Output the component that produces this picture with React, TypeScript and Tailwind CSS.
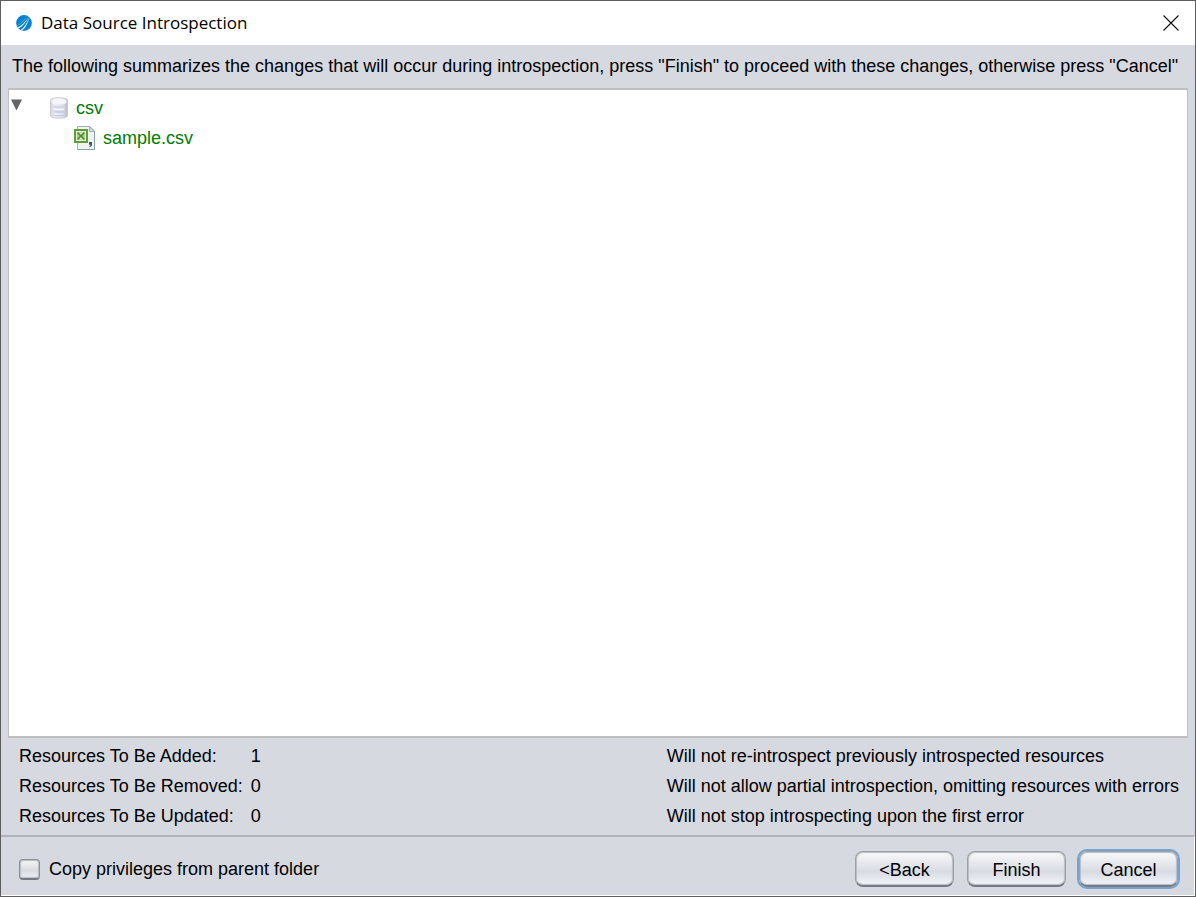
import { useState } from "react";

function AppLogo() {
  return (
    <svg width="16" height="16" viewBox="0 0 16 16" aria-hidden="true">
      <circle cx="8" cy="8" r="7.9" fill="#0a84cc" />
      <path d="M1.6 12.6C5.8 10.6 9.6 6.6 12.8 1.4C10.2 7 6.8 11.2 2.4 13.6Z" fill="#fff" />
      <path d="M4.8 15C8.4 12 11 7.8 13.4 2.4C12 8.2 9.6 12.4 6 15.7Z" fill="#e8f4fb" />
      <path d="M1.2 10.2C4.4 8.6 7.4 5.8 10.4 2.6C7.8 6 4.8 8.8 1.2 10.8Z" fill="#8cc6ea" />
    </svg>
  );
}

function DatabaseIcon() {
  return (
    <svg width="18" height="22" viewBox="0 0 18 22" aria-hidden="true">
      <defs>
        <linearGradient id="db-side" x1="0" x2="1" y1="0" y2="0">
          <stop offset="0" stopColor="#cfd0da" />
          <stop offset="0.25" stopColor="#f3f3fa" />
          <stop offset="0.7" stopColor="#e0e2ef" />
          <stop offset="1" stopColor="#b4b5c6" />
        </linearGradient>
      </defs>
      <path d="M0.5 3.4C0.5 -0.2 17.5 -0.2 17.5 3.4V18.4C17.5 22.2 0.5 22.2 0.5 18.4Z" fill="url(#db-side)" stroke="#cbcbd1" />
      <path d="M1.6 4C1.6 0.6 16.4 0.6 16.4 4V5.4C16.4 8 1.6 8 1.6 5.4Z" fill="#f6f6f7" />
      <path d="M3.5 8.2C6 9 12 9 14.5 8.2V11C12 11.8 6 11.8 3.5 11Z" fill="#d3d7e9" />
      <path d="M3.5 13C6 13.8 12 13.8 14.5 13V15.6C12 16.4 6 16.4 3.5 15.6Z" fill="#cbd0e4" />
      <path d="M3.5 17.4C6 18.2 12 18.2 14.5 17.4V18.8C12 19.8 6 19.8 3.5 18.8Z" fill="#c9cbdd" />
      <path d="M3.5 12C6 12.8 12 12.8 14.5 12" stroke="#fff" fill="none" />
    </svg>
  );
}

function CsvFileIcon() {
  return (
    <svg width="22" height="24" viewBox="0 0 22 24" aria-hidden="true">
      <path d="M3.5 0.5H16L20.5 5V23.5H3.5Z" fill="#eef4f4" stroke="#9db4b6" />
      <path d="M3.5 23.5H20.5V5" fill="none" stroke="#84a3a4" />
      <path d="M15.5 0.5V5.5H20.5Z" fill="#c9d9dc" stroke="#9db4b6" />
      <rect x="0" y="3" width="14" height="14" fill="#619c3a" />
      <rect x="2" y="5" width="10" height="10" fill="#e4efda" />
      <rect x="3" y="6" width="8" height="8" fill="#a5c98a" />
      <path d="M3.6 6.8L10.2 13.2M10.2 6.8L3.6 13.2" stroke="#4e8b2c" strokeWidth="1.4" />
      <path d="M5.4 6.4L7 8.2L8.6 6.4ZM5.4 13.6L7 11.8L8.6 13.6Z" fill="#edf5e6" />
      <path d="M15 16H18V18.6C18 20.2 17.2 21 15.4 21.2V19.9C16.3 19.7 16.6 19.4 16.6 18.8H15Z" fill="#4d4d57" />
    </svg>
  );
}

const counts = [
  { label: "Resources To Be Added:", value: 1 },
  { label: "Resources To Be Removed:", value: 0 },
  { label: "Resources To Be Updated:", value: 0 },
];

const notes = [
  "Will not re-introspect previously introspected resources",
  "Will not allow partial introspection, omitting resources with errors",
  "Will not stop introspecting upon the first error",
];

const buttonFace =
  "h-9 w-[99px] rounded-lg border border-[#9c9fa5] border-b-2 border-b-[#777a81] bg-linear-to-b from-[#fafafb] via-[#d8dbe2] via-60% to-[#f2f5fc] pt-0.5 text-center leading-8 shadow-[inset_0_0_1px_1px_#b9bcc3]";

export default function App() {
  const [open, setOpen] = useState(true);
  const [copy, setCopy] = useState(false);

  return (
    <div className="flex min-h-screen flex-col border border-[#5e5e60] bg-[#d6d9e0] font-['Liberation_Sans',Arial,sans-serif] text-lg leading-[30px] text-black">
      <header className="flex h-11 shrink-0 items-center bg-white pr-4 pl-[15px]">
        <AppLogo />
        <h1 className="ml-[9px] flex-1 font-['Open_Sans','Noto_Sans',sans-serif] text-[17px]">Data Source Introspection</h1>
        <button type="button" aria-label="Close" className="flex size-4 items-center justify-center">
          <svg width="16" height="16" viewBox="0 0 16 16" aria-hidden="true">
            <path d="M0.5 0.5L15.5 15.5M15.5 0.5L0.5 15.5" stroke="#111" strokeWidth="1.1" fill="none" />
          </svg>
        </button>
      </header>

      <main className="flex flex-1 flex-col">
        <p className="px-[11px] pt-1.5 pb-[7px]">
          The following summarizes the changes that will occur during introspection, press "Finish" to proceed with these
          changes, otherwise press "Cancel"
        </p>

        <section className="mx-[7px] flex-1 border border-t-2 border-b-2 border-[#c0c0c0] bg-white text-[#007b00]">
          <ul className="pt-[3px]">
            <li>
              <div className="flex items-center">
                <button
                  type="button"
                  aria-label="Toggle csv"
                  aria-expanded={open}
                  onClick={() => setOpen(!open)}
                  className="mr-7 flex h-[30px] w-[13px] items-start pt-1.5 pl-0.5"
                >
                  <svg width="11" height="12" viewBox="0 0 11 12" aria-hidden="true">
                    <path d="M0 0.5H11L5.5 11.5Z" fill="#646464" />
                  </svg>
                </button>
                <DatabaseIcon />
                <span className="ml-2">csv</span>
              </div>
              {open && (
                <ul>
                  <li className="flex items-center pl-[65px]">
                    <CsvFileIcon />
                    <span className="ml-[7px]">sample.csv</span>
                  </li>
                </ul>
              )}
            </li>
          </ul>
        </section>

        <section className="flex justify-between gap-8 pt-[3px] pr-4 pb-1 pl-[18px]">
          <table className="border-collapse">
            <tbody>
              {counts.map((row) => (
                <tr key={row.label}>
                  <th scope="row" className="p-0 pr-2 text-left font-normal">
                    {row.label}
                  </th>
                  <td className="p-0">{row.value}</td>
                </tr>
              ))}
            </tbody>
          </table>
          <ul>
            {notes.map((note) => (
              <li key={note}>{note}</li>
            ))}
          </ul>
        </section>
      </main>

      <footer className="flex items-center border-t-2 border-r border-b border-t-[#aeb2bb] border-r-white border-b-white pt-3.5 pr-4 pb-2 pl-[18px]">
        <label className="flex flex-1 items-center gap-[9px]">
          <input
            type="checkbox"
            checked={copy}
            onChange={(e) => setCopy(e.target.checked)}
            className="size-[21px] appearance-none rounded border border-[#8b8e95] border-b-2 border-b-[#777a81] bg-linear-to-b from-[#f6f6f7] via-[#d9dbe0] via-60% to-[#eef0f5] shadow-[inset_0_0_1px_1px_#b9bcc3] checked:from-[#8fb0cf] checked:to-[#5483ad]"
          />
          Copy privileges from parent folder
        </label>
        <div className="flex gap-[13px]">
          <button type="button" className={buttonFace}>
            &lt;Back
          </button>
          <button type="button" className={buttonFace}>
            Finish
          </button>
          <button type="button" className={`${buttonFace} outline-2 outline-[#73a4d1]`}>
            Cancel
          </button>
        </div>
      </footer>
    </div>
  );
}
